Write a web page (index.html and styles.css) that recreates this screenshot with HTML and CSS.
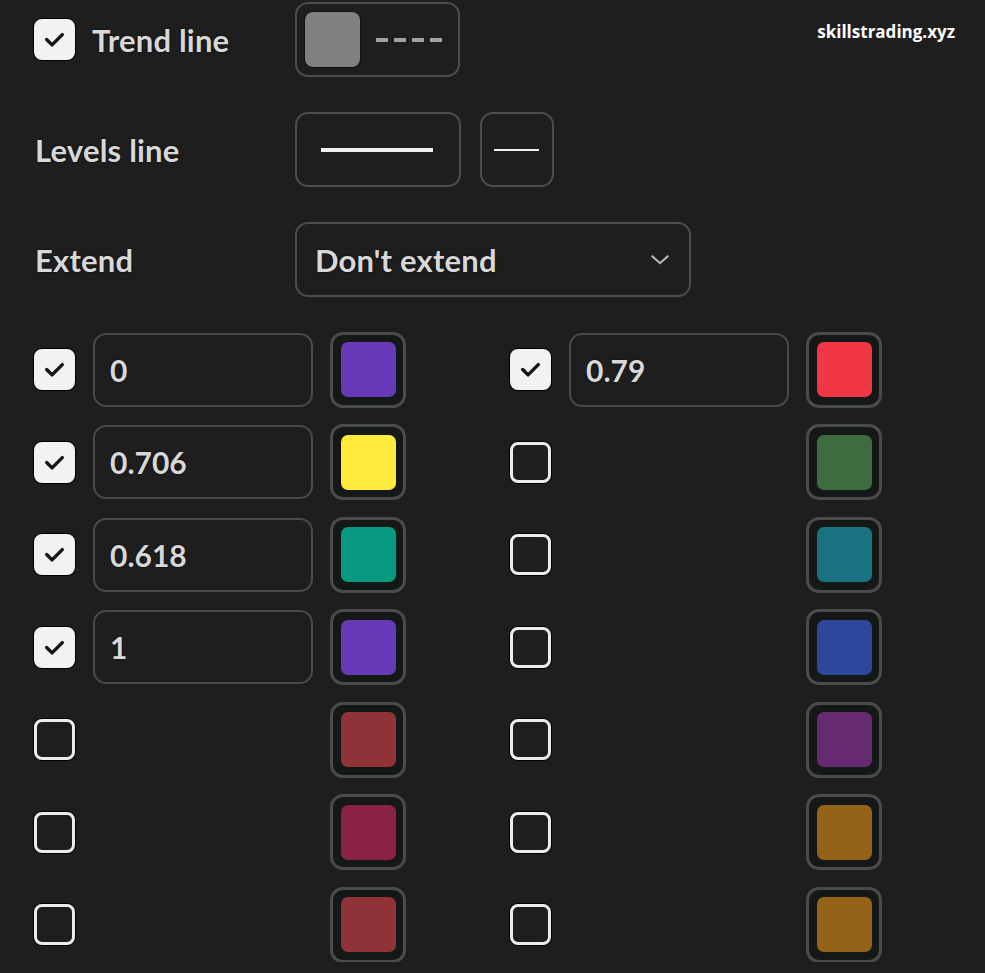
FILE: index.html
```html
<!DOCTYPE html>
<html lang="en">
<head>
    <meta charset="UTF-8">
    <meta name="viewport" content="width=device-width, initial-scale=1.0">
    <title>Fib Retracement - Style</title>
    <link rel="stylesheet" href="styles.css">
</head>
<body>
    <div class="watermark">skillstrading.xyz</div>

    <main class="panel">
        <div class="row">
            <div class="label-cell">
                <span class="check checked"><svg viewBox="0 0 42 42"><polyline points="13,21 18.5,26.5 29,16"/></svg></span>
                <span class="label">Trend line</span>
            </div>
            <button class="btn trend-btn">
                <span class="swatch gray"></span>
                <span class="dashes"></span>
            </button>
        </div>

        <div class="row">
            <div class="label-cell">
                <span class="label">Levels line</span>
            </div>
            <button class="btn width-btn"><span class="line thick"></span></button>
            <button class="btn style-btn"><span class="line thin"></span></button>
        </div>

        <div class="row">
            <div class="label-cell">
                <span class="label">Extend</span>
            </div>
            <div class="btn select">
                <span class="label">Don't extend</span>
                <svg class="chevron" viewBox="0 0 24 14"><polyline points="3,3 12,11 21,3"/></svg>
            </div>
        </div>

        <!-- fib levels, two columns -->
        <div class="levels">
            <div class="level">
                <span class="check checked"><svg viewBox="0 0 42 42"><polyline points="13,21 18.5,26.5 29,16"/></svg></span>
                <div class="value">0</div>
                <button class="color"><span style="background:#673ab7"></span></button>
            </div>
            <div class="level">
                <span class="check checked"><svg viewBox="0 0 42 42"><polyline points="13,21 18.5,26.5 29,16"/></svg></span>
                <div class="value">0.79</div>
                <button class="color"><span style="background:#f23645"></span></button>
            </div>

            <div class="level">
                <span class="check checked"><svg viewBox="0 0 42 42"><polyline points="13,21 18.5,26.5 29,16"/></svg></span>
                <div class="value">0.706</div>
                <button class="color"><span style="background:#ffeb3b"></span></button>
            </div>
            <div class="level">
                <span class="check"></span>
                <div class="value empty"></div>
                <button class="color"><span style="background:#3e6b3f"></span></button>
            </div>

            <div class="level">
                <span class="check checked"><svg viewBox="0 0 42 42"><polyline points="13,21 18.5,26.5 29,16"/></svg></span>
                <div class="value">0.618</div>
                <button class="color"><span style="background:#089981"></span></button>
            </div>
            <div class="level">
                <span class="check"></span>
                <div class="value empty"></div>
                <button class="color"><span style="background:#1a7380"></span></button>
            </div>

            <div class="level">
                <span class="check checked"><svg viewBox="0 0 42 42"><polyline points="13,21 18.5,26.5 29,16"/></svg></span>
                <div class="value">1</div>
                <button class="color"><span style="background:#673ab7"></span></button>
            </div>
            <div class="level">
                <span class="check"></span>
                <div class="value empty"></div>
                <button class="color"><span style="background:#2c479b"></span></button>
            </div>

            <div class="level">
                <span class="check"></span>
                <div class="value empty"></div>
                <button class="color"><span style="background:#8f3339"></span></button>
            </div>
            <div class="level">
                <span class="check"></span>
                <div class="value empty"></div>
                <button class="color"><span style="background:#652a6f"></span></button>
            </div>

            <div class="level">
                <span class="check"></span>
                <div class="value empty"></div>
                <button class="color"><span style="background:#8a2248"></span></button>
            </div>
            <div class="level">
                <span class="check"></span>
                <div class="value empty"></div>
                <button class="color"><span style="background:#946218"></span></button>
            </div>

            <div class="level">
                <span class="check"></span>
                <div class="value empty"></div>
                <button class="color"><span style="background:#8f3339"></span></button>
            </div>
            <div class="level">
                <span class="check"></span>
                <div class="value empty"></div>
                <button class="color"><span style="background:#946218"></span></button>
            </div>
        </div>
    </main>
</body>
</html>
```

FILE: styles.css
```css
body {
    margin: 0;
    background-color: #1e1e1e;
    color: #dcdcdc;
    font-family: Lato, "Noto Sans", sans-serif;
    overflow: hidden;
}
.watermark {
    position: absolute;
    top: 20px;
    right: 30px;
    font-family: "Open Sans", sans-serif;
    font-weight: 700;
    font-size: 17px;
    color: #ffffff;
}
.panel {
    padding: 2px 0 0 34px;
}
.row {
    display: flex;
    align-items: center;
    gap: 19px;
    height: 75px;
    margin-bottom: 35px;
}
.label-cell {
    width: 242px;
    display: flex;
    align-items: center;
    gap: 17px;
}
.label {
    font-size: 31px;
    font-weight: 700;
    letter-spacing: 0.2px;
    color: #d8d8d8;
    text-shadow: 0 0 2px #000;
    white-space: nowrap;
}
.label-cell .label:first-child {
    margin-left: 1px;
}

/* checkboxes */
.check {
    width: 41px;
    height: 41px;
    flex: none;
    box-sizing: border-box;
    border: 3px solid #ececec;
    border-radius: 8px;
    box-shadow: 0 0 0 1px #000;
}
.check.checked {
    background-color: #f2f2f2;
    border-color: #f2f2f2;
}
.check svg {
    display: block;
    width: 41px;
    height: 41px;
    margin: -3px;
}
.check polyline {
    fill: none;
    stroke: #151515;
    stroke-width: 3.5;
    stroke-linecap: round;
    stroke-linejoin: round;
}

/* outlined buttons */
.btn {
    box-sizing: border-box;
    height: 75px;
    border: 2.5px solid #4d4d4d;
    border-radius: 13px;
    background: transparent;
    padding: 0;
    display: flex;
    align-items: center;
}
.trend-btn {
    width: 165px;
    padding-left: 8px;
    gap: 16px;
}
.swatch.gray {
    width: 55px;
    height: 55px;
    border-radius: 8px;
    background-color: #808080;
    box-shadow: 0 0 0 1px #111;
}
.dashes {
    width: 66px;
    height: 4px;
    background: repeating-linear-gradient(90deg, #a3a3a3 0 12px, transparent 12px 18px);
}
.width-btn {
    width: 166px;
    justify-content: center;
}
.style-btn {
    width: 74px;
    justify-content: center;
}
.line {
    display: block;
    background-color: #f0f0f0;
}
.line.thick {
    width: 112px;
    height: 4px;
    margin-left: -2px;
}
.line.thin {
    width: 45px;
    height: 2px;
    margin-left: -2px;
}
.select {
    width: 396px;
    padding: 0 18px 0 18px;
    justify-content: space-between;
}
.chevron {
    width: 22px;
    height: 13px;
}
.chevron polyline {
    fill: none;
    stroke: #bdbdbd;
    stroke-width: 2.2;
}

/* fib levels grid */
.levels {
    display: grid;
    grid-template-columns: 372px 372px;
    column-gap: 104px;
    row-gap: 17.5px;
}
.level {
    display: flex;
    align-items: center;
    height: 75px;
}
.level .check {
    margin-right: 18px;
}
.value {
    box-sizing: border-box;
    width: 220px;
    height: 74px;
    border: 2.5px solid #4a4a4a;
    border-radius: 13px;
    padding-left: 15px;
    display: flex;
    align-items: center;
    font-size: 30px;
    font-weight: 700;
    color: #d8d8d8;
    text-shadow: 0 0 2px #000;
}
.value.empty {
    border-color: transparent;
}
.color {
    box-sizing: border-box;
    width: 76px;
    height: 76px;
    margin-left: 17px;
    border: 3px solid #4b4b4b;
    border-radius: 13px;
    background-color: #141817;
    padding: 0;
    display: flex;
    align-items: center;
    justify-content: center;
}
.color span {
    display: block;
    width: 55px;
    height: 55px;
    border-radius: 7px;
}
```
